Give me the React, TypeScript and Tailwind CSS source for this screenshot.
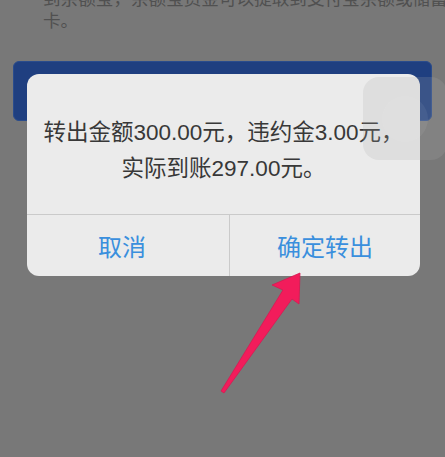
import React from "react";

const font = { fontFamily: '"Liberation Sans", "Noto Sans CJK SC", sans-serif' };

export default function App() {
  return (
    <div
      className="relative h-[457px] w-[445px] overflow-hidden bg-[#787878]"
      style={font}
    >
      {/* page behind the dimmed overlay */}
      <div className="-mt-[12px] pl-[43px] pr-[10px] text-[17.6px] leading-[22px] text-[#505050]">
        <p className="whitespace-nowrap">到余额宝，余额宝资金可以提取到支付宝余额或储蓄</p>
        <p>卡。</p>
      </div>
      <div className="mx-[13px] mt-[29px] h-[60px] rounded-[6px] border border-[#2a4c8c] bg-[#1f3f80]" />

      {/* alert */}
      <div className="absolute left-[27px] top-[74px] flex h-[202px] w-[393px] flex-col overflow-hidden rounded-[12px] bg-[#ebebeb]">
        <div className="flex h-[140px] flex-col items-center pt-[41px] text-[22.5px] leading-[36px] text-[#383838]">
          <p>转出金额300.00元，违约金3.00元，</p>
          <p>实际到账297.00元。</p>
        </div>
        <div className="flex flex-1 border-t border-[#cacaca] text-[24px] text-[#3a8fdd]">
          <button className="flex flex-1 items-center justify-center pt-[5px] pr-[12px]">取消</button>
          <div className="w-px bg-[#cacaca]" />
          <button className="flex flex-1 items-center justify-center pt-[5px]">确定转出</button>
        </div>
      </div>

      {/* assistive touch ghost */}
      <div className="absolute left-[363px] top-[77px] flex h-[83px] w-[84px] items-center justify-center rounded-[16px] bg-[#a8a8a8]/20">
        <div className="h-[46px] w-[46px] rounded-full bg-white/[0.06]" />
      </div>

      {/* annotation arrow */}
      <svg className="absolute left-0 top-0" width="445" height="457" viewBox="0 0 445 457">
        <polygon
          points="300,273 272,285 283,290 221,391 224,393 292,299 299,304"
          fill="#f21c5b"
          stroke="#d81852"
          strokeWidth="0.8"
          strokeLinejoin="round"
        />
      </svg>
    </div>
  );
}
